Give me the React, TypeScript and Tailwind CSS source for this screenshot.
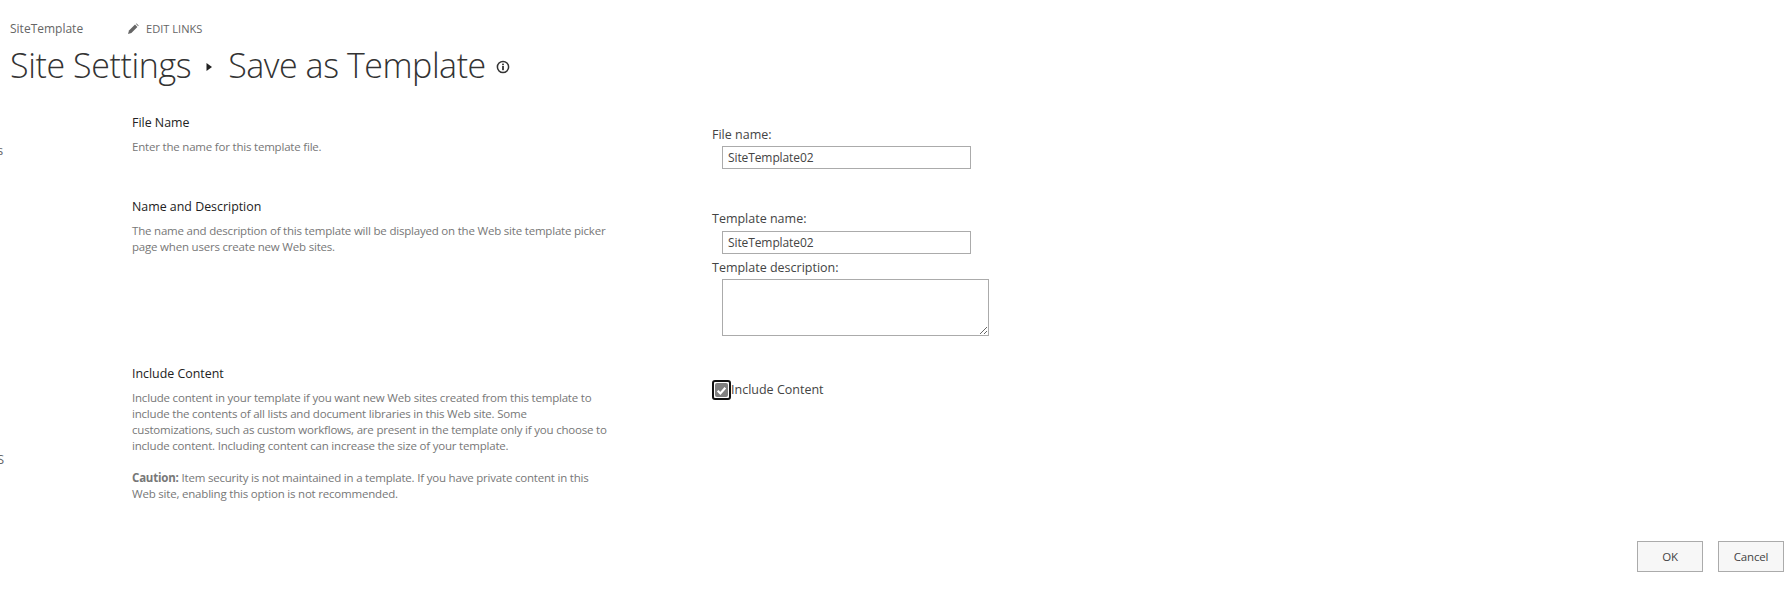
import React from "react";

const font = "font-['Open_Sans',sans-serif]";

const Section = ({ title, side, h, children, form }: { title: string; side?: React.ReactNode; h: string; children: React.ReactNode; form: React.ReactNode }) => (
  <div className={`flex ${h}`}>
    <div className="w-[132px] overflow-hidden text-[13px] leading-[18px] text-[#666]">{side}</div>
    <div className="w-[580px]">
      <h3 className="text-[12.4px] leading-[20px] text-[#222]">{title}</h3>
      <div className="mt-[6px] text-[11.5px] leading-[16px] tracking-[-0.2px] text-[#777]">{children}</div>
    </div>
    <div className="flex-1">{form}</div>
  </div>
);

const Label = ({ children }: { children: React.ReactNode }) => (
  <div className="text-[12.5px] leading-[18px] text-[#444]">{children}</div>
);

const TextBox = ({ value }: { value: string }) => (
  <input
    readOnly
    value={value}
    className="ml-[10px] block h-[23px] w-[249px] border border-[#ababab] px-[5px] text-[12px] tracking-[-0.1px] text-[#444] outline-none"
  />
);

export default function App() {
  return (
    <div className={`h-[604px] w-full overflow-hidden bg-white ${font}`}>
      <div className="flex items-center pl-[10px] pt-[20px]">
        <span className="w-[116px] text-[12px] leading-[18px] text-[#666]">SiteTemplate</span>
        <svg width="12" height="12" viewBox="0 0 12 12" className="ml-[1px]">
          <path d="M1 11 L2 7.6 L8 1.6 L10.4 4 L4.4 10 Z" fill="#666" />
          <path d="M8.8 0.8 L9.6 0.4 L11.6 2.4 L11.2 3.2 Z" fill="#666" />
        </svg>
        <span className="ml-[7px] text-[11.1px] leading-[18px] text-[#666]">EDIT LINKS</span>
      </div>
      <div className="mt-[4px] flex items-center pl-[10px] text-[#333]">
        <h1 className="text-[34px] font-light leading-[46px] tracking-[-0.4px]">Site Settings</h1>
        <svg width="7" height="10" viewBox="0 0 7 10" className="mx-[15px] mt-[3px]">
          <path d="M0.5 1 L6 5 L0.5 9 Z" fill="#222" />
        </svg>
        <h1 className="text-[34px] font-light leading-[46px] tracking-[-0.45px]">Save as Template</h1>
        <svg width="14" height="14" viewBox="0 0 14 14" className="ml-[10px] mt-[3px]">
          <circle cx="7" cy="7" r="5.6" fill="none" stroke="#333" strokeWidth="1.5" />
          <rect x="6.1" y="6" width="1.8" height="4.2" fill="#333" />
          <rect x="6.1" y="3.6" width="1.8" height="1.6" fill="#333" />
        </svg>
      </div>

      <div className="mt-[25px]">
        <Section
          h="h-[84px]"
          title="File Name"
          side={<div className="ml-[-3px] mt-[28px]">s</div>}
          form={
            <div className="mt-[13px]">
              <Label>File name:</Label>
              <div className="mt-[2px]"><TextBox value="SiteTemplate02" /></div>
            </div>
          }
        >
          Enter the name for this template file.
        </Section>

        <Section
          h="h-[167px]"
          title="Name and Description"
          form={
            <div className="mt-[13px]">
              <Label>Template name:</Label>
              <div className="mt-[3px]"><TextBox value="SiteTemplate02" /></div>
              <div className="mt-[5px]"><Label>Template description:</Label></div>
              <textarea readOnly className="ml-[10px] mt-[2px] block h-[57px] w-[267px] border border-[#ababab] outline-none" />
            </div>
          }
        >
          The name and description of this template will be displayed on the Web site template picker
          <br />
          page when users create new Web sites.
        </Section>

        <Section
          h="h-[177px]"
          title="Include Content"
          side={<div className="ml-[-3px] mt-[86px]">S</div>}
          form={
            <div className="mt-[16px] flex items-center">
              <span className="flex h-[20px] w-[19px] items-center justify-center rounded-[3px] border-[2px] border-[#111]">
                <span className="flex h-[14px] w-[13px] items-center justify-center rounded-[2px] bg-[#808080]">
                  <svg width="11" height="11" viewBox="0 0 10 10">
                    <path d="M1.5 5.2 L4 7.7 L8.5 2.5" fill="none" stroke="#fff" strokeWidth="2" />
                  </svg>
                </span>
              </span>
              <span className="text-[12.5px] text-[#444]">Include Content</span>
            </div>
          }
        >
          Include content in your template if you want new Web sites created from this template to
          <br />
          include the contents of all lists and document libraries in this Web site. Some
          <br />
          customizations, such as custom workflows, are present in the template only if you choose to
          <br />
          include content. Including content can increase the size of your template.
          <br />
          <br />
          <b>Caution:</b> Item security is not maintained in a template. If you have private content in this
          <br />
          Web site, enabling this option is not recommended.
        </Section>
      </div>

      <div className="flex justify-end gap-[15px] pr-[7px]">
        <button className="h-[31px] w-[66px] border border-[#ababab] bg-[#f7f7f7] text-[11.5px] tracking-[-0.2px] text-[#444]">OK</button>
        <button className="h-[31px] w-[66px] border border-[#ababab] bg-[#f7f7f7] text-[11.5px] tracking-[-0.2px] text-[#444]">Cancel</button>
      </div>
    </div>
  );
}
